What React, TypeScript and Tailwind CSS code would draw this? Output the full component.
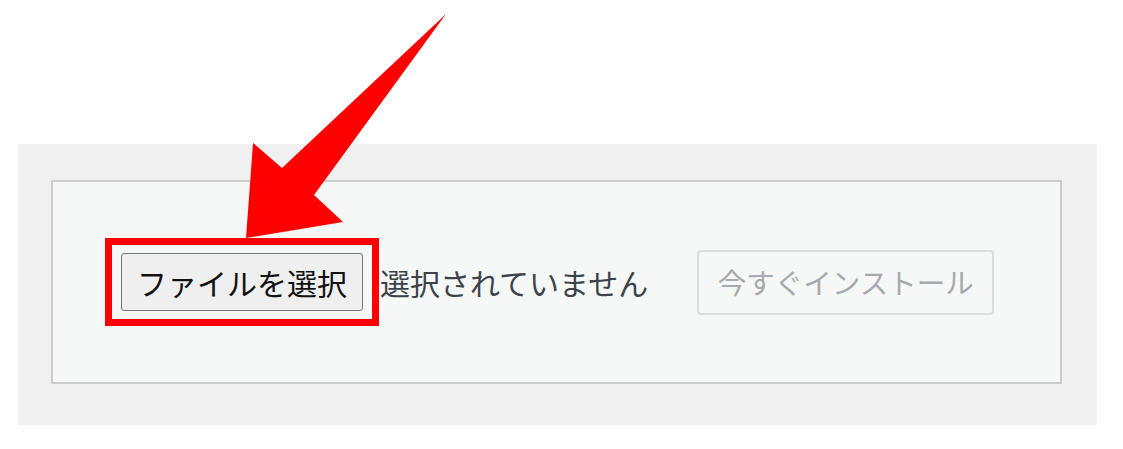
import React from 'react';

const JP_FONT = { fontFamily: '"Noto Sans CJK JP", "Noto Sans", sans-serif' };

export default function App() {
  return (
    <div className="relative w-[1123px] h-[449px] bg-white overflow-hidden" style={JP_FONT}>
      <div className="pt-[144px] pl-[18px]">
        {/* upload panel */}
        <div className="w-[1079px] h-[281px] bg-[#f0f0f0] pt-[36px] pl-[33px]">
          <div className="w-[1011px] h-[204px] border-2 border-[#cbcbcb] bg-[#f6f7f7] flex items-center pl-[52px]">
            <div className="border-[7px] border-[#ff0000] px-[9px] py-[8px]">
              <button className="w-[242px] h-[58px] bg-[#efefef] border border-[#767676] rounded-[3px] text-[30px] text-[#111] leading-none flex items-center justify-center">
                ファイルを選択
              </button>
            </div>
            <span className="ml-[1px] text-[30px] text-[#3c434a] leading-none">選択されていません</span>
            <button
              disabled
              className="ml-[49px] w-[297px] h-[65px] border-2 border-[#dcdcde] rounded-[4px] bg-[#f6f7f7] text-[28.5px] text-[#a7aaad] leading-none flex items-center justify-center"
            >
              今すぐインストール
            </button>
          </div>
        </div>
      </div>

      {/* red pointer arrow */}
      <svg className="absolute left-0 top-0" width="1123" height="449" viewBox="0 0 1123 449">
        <polygon
          points="446,14 314,195 343,222 246,238 253,143 282,168"
          fill="#ff0000"
        />
      </svg>
    </div>
  );
}
